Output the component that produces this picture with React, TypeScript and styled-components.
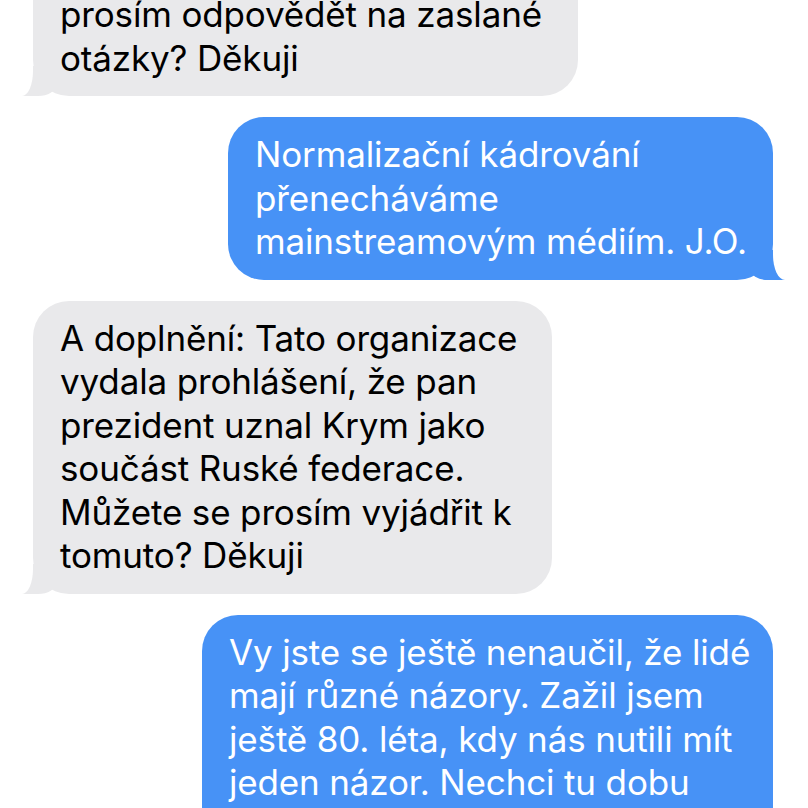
import React from "react";
import styled, { createGlobalStyle, css } from "styled-components";

const GlobalStyle = createGlobalStyle`
  html, body {
    margin: 0;
    padding: 0;
    background: #ffffff;
  }
  body {
    font-family: Inter, "Noto Sans", "Liberation Sans", sans-serif;
    overflow: hidden;
  }
`;

const GRAY = "#e9e9eb";
const BLUE = "#4792f6";

const Thread = styled.div`
  display: flex;
  flex-direction: column;
  gap: 21px;
  margin-top: -7px;
  padding: 0 35px 0 33px;
`;

const leftTail = css`
  &::before {
    content: "";
    position: absolute;
    bottom: 0;
    left: -11px;
    width: 34px;
    height: 30px;
    background: ${GRAY};
    border-bottom-right-radius: 18px 11px;
  }
  &::after {
    content: "";
    position: absolute;
    bottom: 0;
    left: -40px;
    width: 40px;
    height: 34px;
    background: #ffffff;
    border-bottom-right-radius: 11px 25px;
  }
`;

const rightTail = css`
  &::before {
    content: "";
    position: absolute;
    bottom: 0;
    right: -12px;
    width: 35px;
    height: 30px;
    background: ${BLUE};
    border-bottom-left-radius: 18px 11px;
  }
  &::after {
    content: "";
    position: absolute;
    bottom: 0;
    right: -40px;
    width: 40px;
    height: 34px;
    background: #ffffff;
    border-bottom-left-radius: 12px 25px;
  }
`;

const Bubble = styled.div<{ $fromMe?: boolean; $width: number; $cut?: "top" | "bottom" }>`
  position: relative;
  box-sizing: border-box;
  width: ${(p) => p.$width}px;
  align-self: ${(p) => (p.$fromMe ? "flex-end" : "flex-start")};
  padding: 16px 20px 16px 27px;
  border-radius: 36px;
  background: ${(p) => (p.$fromMe ? BLUE : GRAY)};
  color: ${(p) => (p.$fromMe ? "#ffffff" : "#000000")};
  font-size: 35px;
  line-height: 43.5px;
  letter-spacing: -0.15px;
  white-space: nowrap;
  ${(p) =>
    p.$cut === "top" &&
    css`
      padding-top: 0;
      border-top-left-radius: 0;
      border-top-right-radius: 0;
    `}
  ${(p) =>
    p.$cut === "bottom" &&
    css`
      padding-bottom: 60px;
      border-bottom-left-radius: 0;
      border-bottom-right-radius: 0;
    `}
  ${(p) => p.$cut !== "bottom" && (p.$fromMe ? rightTail : leftTail)}
`;

const Line = styled.span`
  display: block;
  position: relative;
  z-index: 1;
`;

type Message = {
  fromMe?: boolean;
  width: number;
  cut?: "top" | "bottom";
  lines: string[];
};

const messages: Message[] = [
  {
    width: 545,
    cut: "top",
    lines: ["prosím odpovědět na zaslané", "otázky? Děkuji"],
  },
  {
    fromMe: true,
    width: 545,
    lines: ["Normalizační kádrování", "přenecháváme", "mainstreamovým médiím. J.O."],
  },
  {
    width: 519,
    lines: [
      "A doplnění: Tato organizace",
      "vydala prohlášení, že pan",
      "prezident uznal Krym jako",
      "součást Ruské federace.",
      "Můžete se prosím vyjádřit k",
      "tomuto? Děkuji",
    ],
  },
  {
    fromMe: true,
    width: 571,
    cut: "bottom",
    lines: [
      "Vy jste se ještě nenaučil, že lidé",
      "mají různé názory. Zažil jsem",
      "ještě 80. léta, kdy nás nutili mít",
      "jeden názor. Nechci tu dobu",
    ],
  },
];

const App = () => {
  return (
    <>
      <GlobalStyle />
      <Thread>
        {messages.map((m, i) => (
          <Bubble key={i} $fromMe={m.fromMe} $width={m.width} $cut={m.cut}>
            {m.lines.map((l) => (
              <Line key={l}>{l}</Line>
            ))}
          </Bubble>
        ))}
      </Thread>
    </>
  );
};

export default App;
